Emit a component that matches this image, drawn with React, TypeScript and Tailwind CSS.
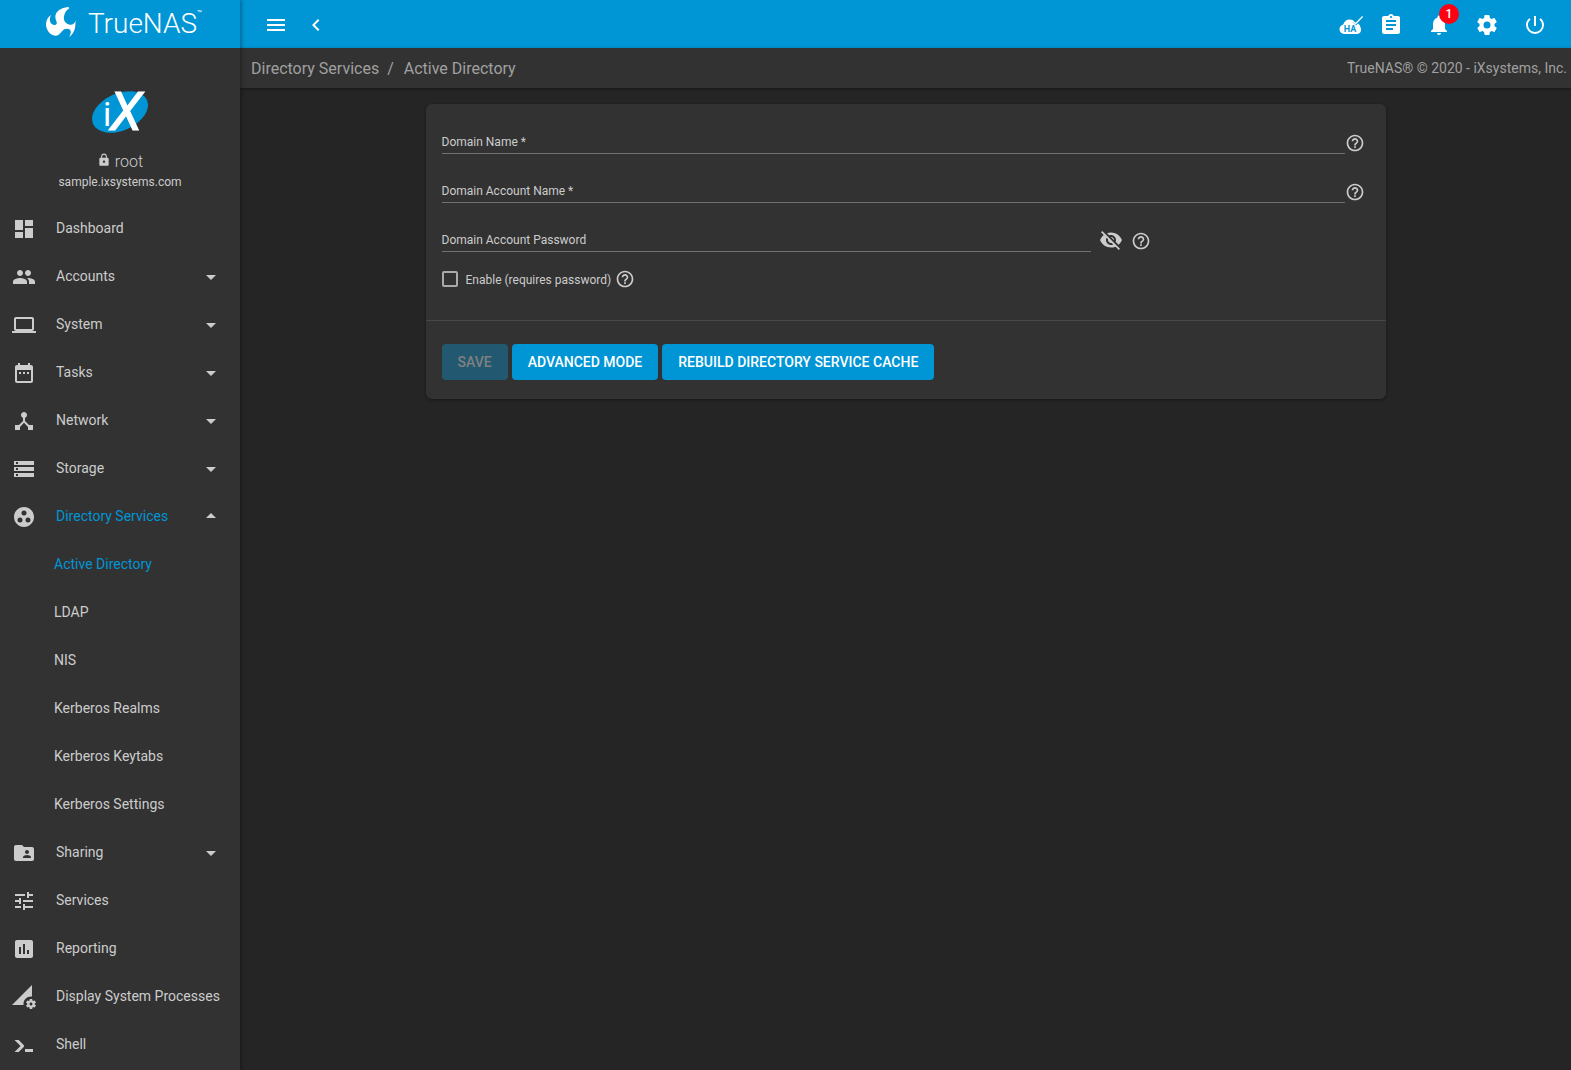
import type { ReactNode } from 'react';
import type { IconType } from 'react-icons';
import {
  MdArrowDropDown,
  MdArrowDropUp,
  MdAssignment,
  MdDashboard,
  MdDateRange,
  MdDeviceHub,
  MdFolderShared,
  MdGroupWork,
  MdHelpOutline,
  MdInsertChart,
  MdLaptop,
  MdLock,
  MdMenu,
  MdNotifications,
  MdPeople,
  MdPermDataSetting,
  MdPowerSettingsNew,
  MdStorage,
  MdTune,
  MdVisibilityOff,
} from 'react-icons/md';

type IconProps = { className?: string };

type NavItem = {
  label: string;
  icon: IconType | ((props: IconProps) => ReactNode);
  expandable?: boolean;
  children?: string[];
};

const ACTIVE_PAGE = 'Active Directory';

const NAV_ITEMS: NavItem[] = [
  { label: 'Dashboard', icon: MdDashboard },
  { label: 'Accounts', icon: MdPeople, expandable: true },
  { label: 'System', icon: MdLaptop, expandable: true },
  { label: 'Tasks', icon: MdDateRange, expandable: true },
  { label: 'Network', icon: MdDeviceHub, expandable: true },
  { label: 'Storage', icon: MdStorage, expandable: true },
  {
    label: 'Directory Services',
    icon: MdGroupWork,
    expandable: true,
    children: ['Active Directory', 'LDAP', 'NIS', 'Kerberos Realms', 'Kerberos Keytabs', 'Kerberos Settings'],
  },
  { label: 'Sharing', icon: MdFolderShared, expandable: true },
  { label: 'Services', icon: MdTune },
  { label: 'Reporting', icon: MdInsertChart },
  { label: 'Display System Processes', icon: MdPermDataSetting },
  { label: 'Shell', icon: ConsoleIcon },
];

function ConsoleIcon({ className }: IconProps) {
  return (
    <svg className={className} viewBox="0 0 24 24" fill="currentColor" aria-hidden="true">
      <path d="M13 19v-3h8v3h-8M8.5 13 2.47 7h4.24l4.96 4.95c.58.59.58 1.55 0 2.12L6.74 19H2.5l6-6z" />
    </svg>
  );
}

function ChevronLeftIcon({ className }: IconProps) {
  return (
    <svg className={className} viewBox="0 0 24 24" fill="currentColor" aria-hidden="true">
      <path d="M15.41 16.58 10.83 12l4.58-4.59L14 6l-6 6 6 6 1.41-1.42z" />
    </svg>
  );
}

function GearIcon({ className }: IconProps) {
  return (
    <svg className={className} viewBox="0 0 24 24" fill="currentColor" aria-hidden="true">
      <path d="M12 15.5A3.5 3.5 0 0 1 8.5 12 3.5 3.5 0 0 1 12 8.5a3.5 3.5 0 0 1 3.5 3.5 3.5 3.5 0 0 1-3.5 3.5m7.43-2.53c.04-.32.07-.64.07-.97s-.03-.66-.07-1l2.11-1.63c.19-.15.24-.42.12-.64l-2-3.46c-.12-.22-.39-.31-.61-.22l-2.49 1c-.52-.39-1.06-.73-1.69-.98l-.37-2.65A.506.506 0 0 0 14 2h-4c-.25 0-.46.18-.5.42l-.37 2.65c-.63.25-1.17.59-1.69.98l-2.49-1c-.22-.09-.49 0-.61.22l-2 3.46c-.13.22-.07.49.12.64L4.57 11c-.04.34-.07.67-.07 1s.03.65.07.97l-2.11 1.66c-.19.15-.25.42-.12.64l2 3.46c.12.22.39.3.61.22l2.49-1.01c.52.4 1.06.74 1.69.99l.37 2.65c.04.24.25.42.5.42h4c.25 0 .46-.18.5-.42l.37-2.65c.63-.26 1.17-.59 1.69-.99l2.49 1.01c.22.08.49 0 .61-.22l2-3.46c.12-.22.07-.49-.12-.64l-2.11-1.66z" />
    </svg>
  );
}

function HaStatusIcon({ className }: IconProps) {
  return (
    <svg className={className} viewBox="0 0 24 20" aria-hidden="true">
      <path
        fill="white"
        d="M5 19A4.600 4.600 0 0 1 .5 14.300C.5 12 2 10.200 4.200 9.600 5.200 6.500 7.600 4.600 10.600 4.600c2.500 0 4.600 1.300 5.700 3.400 3 0 4.700 1.500 4.900 3.800.6.700.9 1.600.9 2.800C22.100 17.200 20.500 19 18.200 19z"
      />
      <path fill="none" stroke="#0095d5" strokeWidth="3" d="m14.600 5.900 2.400 2.400L24 1" />
      <path fill="none" stroke="white" strokeWidth="1.400" d="m13 5.400 3.600 3.400 7-7.400" />
      <text x="11" y="17" textAnchor="middle" fontSize="9" className="fill-[#0095d5] font-bold">
        HA
      </text>
    </svg>
  );
}

function TrueNasMark({ className }: IconProps) {
  return (
    <svg className={className} viewBox="0 0 90 90" fill="white" aria-hidden="true">
      <path d="M66 1C46 2 28 13 28 30c0 9 6 15 4 20-3 6-14 5-19-4-3-8-1-17 3-23C2 32-2 47 1 60c4 16 16 27 30 26 11-1 15-14 24-19 9-4 17-1 19 5 1 6-1 12-5 18 13-9 20-24 19-40l2-10c-4 10-11 15-19 13-13-3-19-12-17-25 2-12 8-20 15-23z" />
      <path d="M62 0c4 0 7 1 9 4l-9-1z" />
    </svg>
  );
}

function IxLogo({ className }: IconProps) {
  return (
    <svg className={className} viewBox="0 0 56 42" role="img" aria-label="iX">
      <ellipse cx="28" cy="21" rx="29.500" ry="18.500" transform="rotate(-24 28 21)" fill="#0095d5" />
      <text x="11" y="35" fontSize="34" className="fill-white">
        i
        <tspan
          x="18"
          y="39"
          fontSize="53"
          stroke="white"
          className="font-['Liberation_Sans_Narrow',Roboto,sans-serif] italic"
        >
          X
        </tspan>
      </text>
    </svg>
  );
}

function NavLink({ item }: { item: NavItem }) {
  const Icon = item.icon;
  const open = Boolean(item.children);
  return (
    <li>
      <a href="#" className="flex h-12 items-center pr-[17px] pl-3">
        <Icon className="mt-0.5 size-6 shrink-0" />
        <span className={`ml-5 flex-1 whitespace-nowrap ${open ? 'text-[#0095d5]' : ''}`}>{item.label}</span>
        {item.expandable && (open ? <MdArrowDropUp className="size-6" /> : <MdArrowDropDown className="mt-0.5 size-6" />)}
      </a>
      {item.children && (
        <ul>
          {item.children.map((child) => (
            <li key={child}>
              <a href="#" className={`flex h-12 items-center pl-[54px] ${child === ACTIVE_PAGE ? 'text-[#0095d5]' : ''}`}>
                {child}
              </a>
            </li>
          ))}
        </ul>
      )}
    </li>
  );
}

function HelpButton({ label, className = '' }: { label: string; className?: string }) {
  return (
    <button type="button" aria-label={`Help for ${label}`} className={`shrink-0 ${className}`}>
      <MdHelpOutline className="size-5" />
    </button>
  );
}

function TextField({ id, label, type = 'text' }: { id: string; label: string; type?: string }) {
  return (
    <div className="relative flex-1 border-b border-[#707070]">
      <label htmlFor={id} className="absolute bottom-[3px] left-0 leading-4">
        {label}
      </label>
      <input id={id} type={type} className="block h-6 w-full bg-transparent outline-none" />
    </div>
  );
}

export default function App() {
  return (
    <div className="flex min-h-screen bg-[#252525] font-[Roboto,sans-serif] text-sm text-[#cccccc]">
      {/* Sidebar */}
      <aside className="z-10 w-60 shrink-0 bg-[#323232] shadow-[1px_0_4px_rgba(0,0,0,0.4)]">
        <a href="#" className="flex h-12 items-center justify-center bg-[#0095d5] pl-2 text-white">
          <TrueNasMark className="mb-1 size-[30px]" />
          <span className="ml-3 text-[28px] leading-10 font-light">TrueNAS</span>
          <span className="self-start pt-2 text-[8px] leading-3">™</span>
        </a>

        <div className="flex h-39 flex-col items-center pt-[43px]">
          <IxLogo className="h-[42px] w-14 overflow-visible" />
          <div className="mt-[17px] flex items-center gap-1 leading-6">
            <MdLock className="mb-1 size-3.5" />
            <span className="text-base font-light">root</span>
          </div>
          <div className="text-xs leading-4">sample.ixsystems.com</div>
        </div>

        <nav>
          <ul>
            {NAV_ITEMS.map((item) => (
              <NavLink key={item.label} item={item} />
            ))}
          </ul>
        </nav>
      </aside>

      <div className="flex min-w-0 flex-1 flex-col">
        {/* Top bar */}
        <header className="flex h-12 items-center justify-between bg-[#0095d5] px-6 pt-0.5 text-white">
          <div className="flex items-center gap-4">
            <button type="button" aria-label="Toggle menu">
              <MdMenu className="size-6" />
            </button>
            <button type="button" aria-label="Collapse menu">
              <ChevronLeftIcon className="size-6" />
            </button>
          </div>
          <div className="flex items-center gap-6">
            <button type="button" aria-label="HA status" className="-mr-2">
              <HaStatusIcon className="h-5 w-6" />
            </button>
            <button type="button" aria-label="Task manager">
              <MdAssignment className="size-6" />
            </button>
            <button type="button" aria-label="Alerts" className="relative">
              <MdNotifications className="size-6" />
              <span className="absolute -top-[9px] -right-2 flex size-5 items-center justify-center rounded-full bg-[#ff0013] text-xs font-medium">
                1
              </span>
            </button>
            <button type="button" aria-label="Settings">
              <GearIcon className="size-6" />
            </button>
            <button type="button" aria-label="Power">
              <MdPowerSettingsNew className="size-6" />
            </button>
          </div>
        </header>

        {/* Breadcrumb */}
        <div className="flex h-10 items-center justify-between bg-[#323232] pr-1 pl-[11px] text-[#a0a0a0] shadow-[0_1px_3px_rgba(0,0,0,0.4)]">
          <nav aria-label="Breadcrumb" className="flex pt-0.5 text-base">
            <a href="#">Directory Services</a>
            <span className="px-2">/</span>
            <a href="#" className="ml-0.5">
              Active Directory
            </a>
          </nav>
          <p>TrueNAS® © 2020 - iXsystems, Inc.</p>
        </div>

        <main className="p-4">
          <form className="mx-auto max-w-[960px] rounded-md bg-[#323232] text-xs shadow-[0_1px_3px_rgba(0,0,0,0.4)]">
            <div className="px-4 pt-[25px] pb-[31px]">
              <div className="flex flex-col gap-6">
                <div className="flex items-center pr-[5px]">
                  <TextField id="domain-name" label="Domain Name *" />
                  <HelpButton label="Domain Name" className="mt-0.5" />
                </div>
                <div className="flex items-center pr-[5px]">
                  <TextField id="account-name" label="Domain Account Name *" />
                  <HelpButton label="Domain Account Name" className="mt-0.5" />
                </div>
                <div className="flex items-center">
                  <div className="flex w-[70%]">
                    <TextField id="account-password" label="Domain Account Password" type="password" />
                  </div>
                  <button type="button" aria-label="Show password" className="mx-2">
                    <MdVisibilityOff className="size-6" />
                  </button>
                  <HelpButton label="Domain Account Password" className="mt-0.5" />
                </div>
              </div>
              <div className="mt-[17px] flex items-center">
                <input
                  id="enable"
                  type="checkbox"
                  className="size-4 appearance-none rounded-xs border-2 border-[#aaaaaa] checked:bg-[#0095d5]"
                />
                <label htmlFor="enable" className="mr-1 ml-2 pt-0.5">
                  Enable (requires password)
                </label>
                <HelpButton label="Enable" />
              </div>
            </div>

            <div className="flex flex-wrap gap-1 border-t border-[#474747] px-4 pt-[23px] pb-[19px] text-sm font-medium">
              <button type="submit" disabled className="h-9 rounded bg-[#235871] px-4 text-[#808080] uppercase">
                Save
              </button>
              <button type="button" className="h-9 rounded bg-[#0095d5] px-4 text-white uppercase">
                Advanced Mode
              </button>
              <button type="button" className="h-9 rounded bg-[#0095d5] px-4 text-white uppercase">
                Rebuild Directory Service Cache
              </button>
            </div>
          </form>
        </main>
      </div>
    </div>
  );
}
